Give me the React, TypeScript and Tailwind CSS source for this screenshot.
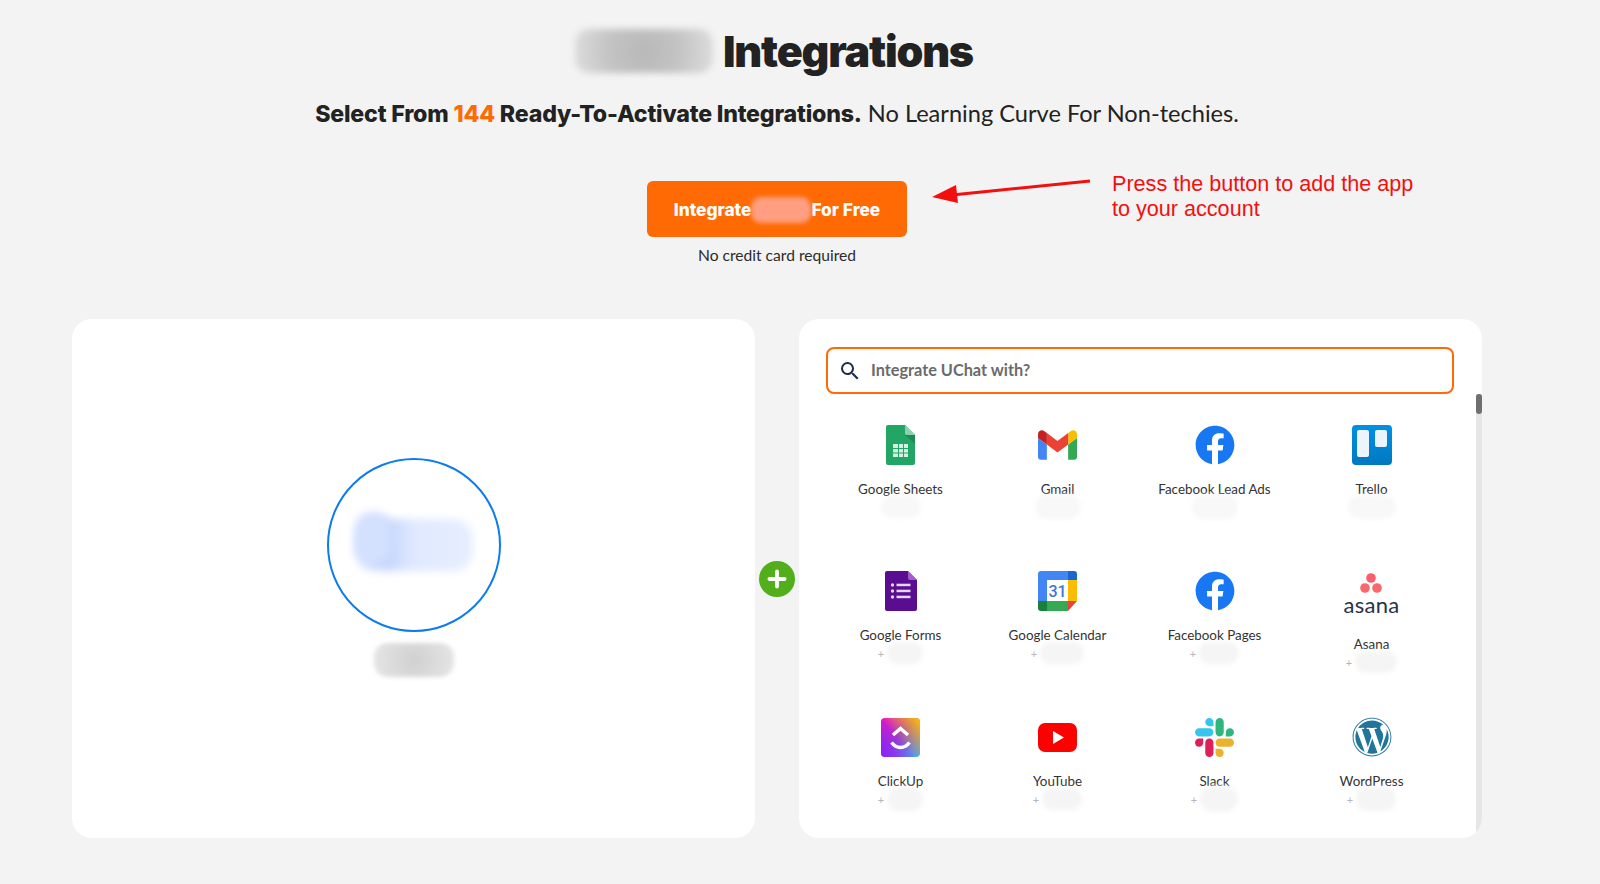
import type { ReactNode } from "react";
import { FaFacebook, FaWordpress } from "react-icons/fa";
import { MdSearch } from "react-icons/md";
import { Plus } from "lucide-react";

function SheetsIcon() {
  return (
    <svg width="29" height="40" viewBox="0 0 29 40">
      <path d="M2 0h17l10 10v28a2 2 0 0 1-2 2H2a2 2 0 0 1-2-2V2a2 2 0 0 1 2-2z" fill="#23a566" />
      <path d="M19 0l10 10h-8a2 2 0 0 1-2-2z" fill="#8ed1b1" />
      <path d="M19 10l10 9v-9z" fill="#1c8a55" />
      <path d="M7 19h15v13H7z" fill="#d5efe2" />
      <path d="M7 23h15v1H7zM7 27.500h15v1H7zM12 19h1v13h-1zM17 19h1v13h-1z" fill="#23a566" />
    </svg>
  );
}

function GmailIcon() {
  return (
    <svg width="39" height="30" viewBox="52 42 88 66">
      <path fill="#4285f4" d="M58 108h14V74L52 59v43c0 3.32 2.69 6 6 6" />
      <path fill="#34a853" d="M120 108h14c3.32 0 6-2.69 6-6V59l-20 15" />
      <path fill="#fbbc04" d="M120 48v26l20-15v-8c0-7.420-8.470-11.650-14.400-7.200" />
      <path fill="#ea4335" d="M72 74V48l24 18 24-18v26L96 92" />
      <path fill="#c5221f" d="M52 51v8l20 15V48l-5.600-4.200c-5.940-4.450-14.400-.22-14.400 7.200" />
    </svg>
  );
}

function TrelloIcon() {
  return (
    <svg width="40" height="40" viewBox="0 0 40 40">
      <defs>
        <linearGradient id="trello" x1="0" y1="0" x2="0" y2="1">
          <stop offset="0" stopColor="#0091e6" />
          <stop offset="1" stopColor="#0079bf" />
        </linearGradient>
      </defs>
      <rect width="40" height="40" rx="4" fill="url(#trello)" />
      <rect x="5" y="5" width="12" height="27" rx="2" fill="#edf5fc" />
      <rect x="23" y="5" width="12" height="17" rx="2" fill="#edf5fc" />
    </svg>
  );
}

function FormsIcon() {
  return (
    <svg width="32" height="40" viewBox="0 0 32 40">
      <path d="M2 0h21l9 9v29a2 2 0 0 1-2 2H2a2 2 0 0 1-2-2V2a2 2 0 0 1 2-2z" fill="#5a0d91" />
      <path d="M23 0l9 9h-7a2 2 0 0 1-2-2z" fill="#a35cc9" />
      <g fill="#e6d5f0">
        <circle cx="7.500" cy="14" r="1.700" />
        <circle cx="7.500" cy="20" r="1.700" />
        <circle cx="7.500" cy="26" r="1.700" />
        <rect x="11.500" y="12.700" width="14" height="2.500" />
        <rect x="11.500" y="18.700" width="14" height="2.500" />
        <rect x="11.500" y="24.700" width="14" height="2.500" />
      </g>
    </svg>
  );
}

function CalendarIcon() {
  return (
    <svg width="39" height="40" viewBox="0 0 39 40">
      <path d="M3 0h27v9H9v21H0V3a3 3 0 0 1 3-3z" fill="#4285f4" />
      <path d="M30 0h6a3 3 0 0 1 3 3v6h-9z" fill="#1967d2" />
      <path d="M30 9h9v21h-9z" fill="#fbbc04" />
      <path d="M9 30h21v10H9z" fill="#34a853" />
      <path d="M0 30h9v10H3a3 3 0 0 1-3-3z" fill="#188038" />
      <path d="M30 30h9l-9 10z" fill="#ea4335" />
      <rect x="9" y="9" width="21" height="21" fill="#fff" />
      <text x="19.500" y="26" textAnchor="middle" fontSize="16" fontWeight="500" fontFamily="Roboto, sans-serif" fill="#3f78d0">31</text>
    </svg>
  );
}

function AsanaIcon() {
  return (
    <div className="flex flex-col items-center pt-[2px]">
      <svg width="22" height="20" viewBox="0 0 22 20">
        <circle cx="11" cy="5" r="4.800" fill="#f95f6f" />
        <circle cx="5" cy="15" r="4.800" fill="#f9686a" />
        <circle cx="17" cy="15" r="4.800" fill="#f9686a" />
      </svg>
      <span className="text-[22px] leading-[24px] tracking-[0.3px] text-[#273347] [font-family:Lato,sans-serif]">asana</span>
    </div>
  );
}

function ClickUpIcon() {
  return (
    <svg width="39" height="39" viewBox="0 0 39 39">
      <defs>
        <linearGradient id="cu1" x1="0" y1="0" x2="1" y2="1">
          <stop offset="0" stopColor="#f80fc0" />
          <stop offset="0.45" stopColor="#a238c8" />
          <stop offset="1" stopColor="#3fa8ff" />
        </linearGradient>
        <linearGradient id="cu2" x1="1" y1="0" x2="0.4" y2="0.5">
          <stop offset="0" stopColor="#ffc400" />
          <stop offset="1" stopColor="#ffc400" stopOpacity="0" />
        </linearGradient>
        <linearGradient id="cu3" x1="0" y1="1" x2="0.6" y2="0.6">
          <stop offset="0" stopColor="#8a1fff" />
          <stop offset="1" stopColor="#8a1fff" stopOpacity="0" />
        </linearGradient>
      </defs>
      <rect width="39" height="39" rx="4" fill="url(#cu1)" />
      <rect width="39" height="39" rx="4" fill="url(#cu2)" />
      <rect width="39" height="39" rx="4" fill="url(#cu3)" />
      <path d="M12 17l7.500-6.500L27 17" fill="none" stroke="#fff" strokeWidth="3.500" />
      <path d="M10.500 24.500c5 6.500 13 6.500 18 0" fill="none" stroke="#fff" strokeWidth="3.500" />
    </svg>
  );
}

function YouTubeIcon() {
  return (
    <svg width="39" height="29" viewBox="0 0 39 29">
      <rect width="39" height="29" rx="7" fill="#ff0000" />
      <path d="M15 8l11 6.500L15 21z" fill="#fff" />
    </svg>
  );
}

function SlackIcon() {
  return (
    <svg width="39" height="39" viewBox="0 0 122.800 122.800">
      <path fill="#e01e5a" d="M25.800 77.600c0 7.100-5.800 12.900-12.900 12.900S0 84.700 0 77.600s5.800-12.900 12.900-12.900h12.900v12.900zM32.300 77.600c0-7.100 5.800-12.900 12.900-12.900s12.900 5.800 12.900 12.900v32.300c0 7.100-5.800 12.900-12.900 12.900s-12.900-5.800-12.900-12.900V77.600z" />
      <path fill="#36c5f0" d="M45.200 25.800c-7.100 0-12.900-5.800-12.900-12.900S38.100 0 45.200 0s12.900 5.800 12.900 12.900v12.900H45.200zM45.200 32.300c7.100 0 12.900 5.800 12.900 12.900s-5.800 12.900-12.900 12.900H12.900C5.800 58.100 0 52.300 0 45.200s5.800-12.900 12.900-12.900h32.300z" />
      <path fill="#2eb67d" d="M97 45.200c0-7.100 5.800-12.900 12.900-12.900s12.900 5.800 12.900 12.900-5.800 12.900-12.900 12.900H97V45.200zM90.500 45.200c0 7.100-5.800 12.900-12.900 12.900s-12.900-5.800-12.900-12.900V12.900C64.700 5.800 70.500 0 77.600 0s12.900 5.800 12.900 12.900v32.300z" />
      <path fill="#ecb22e" d="M77.600 97c7.100 0 12.900 5.800 12.900 12.900s-5.800 12.900-12.900 12.900-12.900-5.800-12.900-12.900V97h12.900zM77.600 90.500c-7.100 0-12.900-5.800-12.900-12.900s5.800-12.900 12.900-12.900h32.300c7.100 0 12.900 5.800 12.900 12.900s-5.800 12.900-12.900 12.900H77.600z" />
    </svg>
  );
}

type Integration = {
  name: string;
  icon: ReactNode;
  blob: string;
  plus?: boolean;
  tall?: boolean;
};

const integrations: Integration[] = [
  { name: "Google Sheets", icon: <SheetsIcon />, blob: "w-[40px] h-[22px] bg-[#f8f8f8]" },
  { name: "Gmail", icon: <GmailIcon />, blob: "w-[46px] h-[24px] bg-[#f8f8f8]" },
  { name: "Facebook Lead Ads", icon: <FaFacebook size={40} color="#1877f2" />, blob: "w-[46px] h-[24px] bg-[#f8f8f8]" },
  { name: "Trello", icon: <TrelloIcon />, blob: "w-[48px] h-[24px] bg-[#f8f8f8]" },
  { name: "Google Forms", icon: <FormsIcon />, blob: "w-[36px] h-[22px] bg-[#f5f5f5]", plus: true },
  { name: "Google Calendar", icon: <CalendarIcon />, blob: "w-[44px] h-[22px] bg-[#f5f5f5]", plus: true },
  { name: "Facebook Pages", icon: <FaFacebook size={40} color="#1877f2" />, blob: "w-[40px] h-[22px] bg-[#f5f5f5]", plus: true },
  { name: "Asana", icon: <AsanaIcon />, blob: "w-[42px] h-[22px] bg-[#f5f5f5]", plus: true, tall: true },
  { name: "ClickUp", icon: <ClickUpIcon />, blob: "w-[36px] h-[24px] bg-[#f5f5f5]", plus: true },
  { name: "YouTube", icon: <YouTubeIcon />, blob: "w-[40px] h-[22px] bg-[#f5f5f5]", plus: true },
  { name: "Slack", icon: <SlackIcon />, blob: "w-[38px] h-[26px] bg-[#f5f5f5]", plus: true },
  { name: "WordPress", icon: <FaWordpress size={40} color="#21759b" />, blob: "w-[40px] h-[24px] bg-[#f5f5f5]", plus: true },
];

function IntegrationItem({ item }: { item: Integration }) {
  return (
    <div className="flex flex-col items-center">
      <div className={item.tall ? "flex h-[49px] items-start justify-center" : "flex h-[40px] items-center justify-center"}>
        {item.icon}
      </div>
      <p className="mt-[14px] text-[13.400px] leading-[20px] text-[#333333]">{item.name}</p>
      <div className="mt-[-2px] flex h-[20px] items-center justify-center gap-[3px]">
        {item.plus && <span className="text-[11px] leading-none text-[#b5b5b5]">+</span>}
        <div className={`rounded-full blur-[2px] ${item.blob}`} />
      </div>
    </div>
  );
}

export default function App() {
  return (
    <div className="h-[884px] overflow-hidden bg-[#f3f3f3] text-[#222222] [font-family:Lato,sans-serif]">
      <div className="relative ml-[72px] w-[1410px]">
        <h1 className="flex items-center justify-center gap-[10px] pt-[25px] pr-[6px] text-[43px] leading-[52px] font-black tracking-[-1.200px] [font-family:Inter,sans-serif]">
          <span className="h-[44px] w-[138px] rounded-[14px] bg-[radial-gradient(circle,#b8b8b8,#c4c4c4_50%,#dedede)] blur-[3px]" />
          Integrations
        </h1>

        <p className="mt-[20px] text-center text-[23.600px] leading-[32px]">
          <span className="text-[23.200px] font-extrabold tracking-[-0.2px] [font-family:Inter,sans-serif]">
            Select From <span className="text-[#ff6a04]">144</span> Ready-To-Activate Integrations.
          </span>{" "}
          No Learning Curve For Non-techies.
        </p>

        <div className="mt-[51px] flex flex-col items-center">
          <button className="flex h-[56px] w-[260px] items-center justify-center rounded-[6px] bg-[#ff6a04] pt-[2px] text-[17.300px] font-extrabold text-white [font-family:Inter,sans-serif]">
            Integrate
            <span className="h-[26px] w-[60px] rounded-[10px] bg-[#ff9e80] blur-[2px]" />
            For Free
          </button>
          <p className="mt-[8px] text-[15.600px] leading-[20px] text-[#2b2b2b]">No credit card required</p>
        </div>

        {/* annotation sits on top of the header */}
        <svg className="absolute top-[175px] left-[858px]" width="162" height="32" viewBox="0 0 162 32">
          <path d="M160 6L22 20" stroke="#f40f0f" strokeWidth="3" />
          <path d="M2 22l24-12 2 18z" fill="#f40f0f" />
        </svg>
        <p className="absolute top-[171px] left-[1040px] text-[21.600px] leading-[25px] text-[#f40f0f] [font-family:'Liberation_Sans',sans-serif]">
          Press the button to add the app
          <br />
          to your account
        </p>

        <div className="relative mt-[54px] flex gap-[44px]">
          <div className="flex h-[519px] w-[683px] flex-col items-center rounded-[20px] bg-white pt-[139px]">
            <div className="relative flex h-[174px] w-[174px] items-center justify-center rounded-full border-2 border-[#0a7cf0]">
              <div className="h-[52px] w-[118px] rounded-[20px] bg-[linear-gradient(90deg,#dde7fe,#c5d6fd_28%,#e0e9fe_50%,#e6eefe)] blur-[4px]" />
              <div className="absolute top-[52px] left-[26px] h-[50px] w-[36px] rounded-[16px] bg-[#d3e0fe] blur-[4px]" />
            </div>
            <div className="mt-[11px] h-[34px] w-[80px] rounded-[14px] bg-[radial-gradient(circle,#d0d0d0,#e6e6e6)] blur-[2px]" />
          </div>

          <div className="relative h-[519px] w-[683px] overflow-hidden rounded-[20px] bg-white pt-[28px]">
            <div className="ml-[27px] flex h-[47px] w-[628px] items-center gap-[9px] rounded-[8px] border-2 border-[#ff6a04] pl-[10px]">
              <MdSearch size={24} color="#1f2a4d" />
              <span className="text-[16.300px] font-bold text-[#6b6b6b]">Integrate UChat with?</span>
            </div>
            <div className="mt-[31px] ml-[23px] grid w-[628px] auto-rows-[146.200px] grid-cols-4">
              {integrations.map((item) => (
                <IntegrationItem key={item.name} item={item} />
              ))}
            </div>
            <div className="absolute top-[75px] right-0 bottom-0 w-[6px] bg-[#e6e6e6]">
              <div className="h-[20px] w-[6px] rounded-full bg-[#6f6f6f]" />
            </div>
          </div>

          <div className="absolute top-[242px] left-[687px] flex h-[36px] w-[36px] items-center justify-center rounded-full bg-[#52ae1a]">
            <Plus size={26} strokeWidth={3.500} color="#ffffff" />
          </div>
        </div>
      </div>
    </div>
  );
}
